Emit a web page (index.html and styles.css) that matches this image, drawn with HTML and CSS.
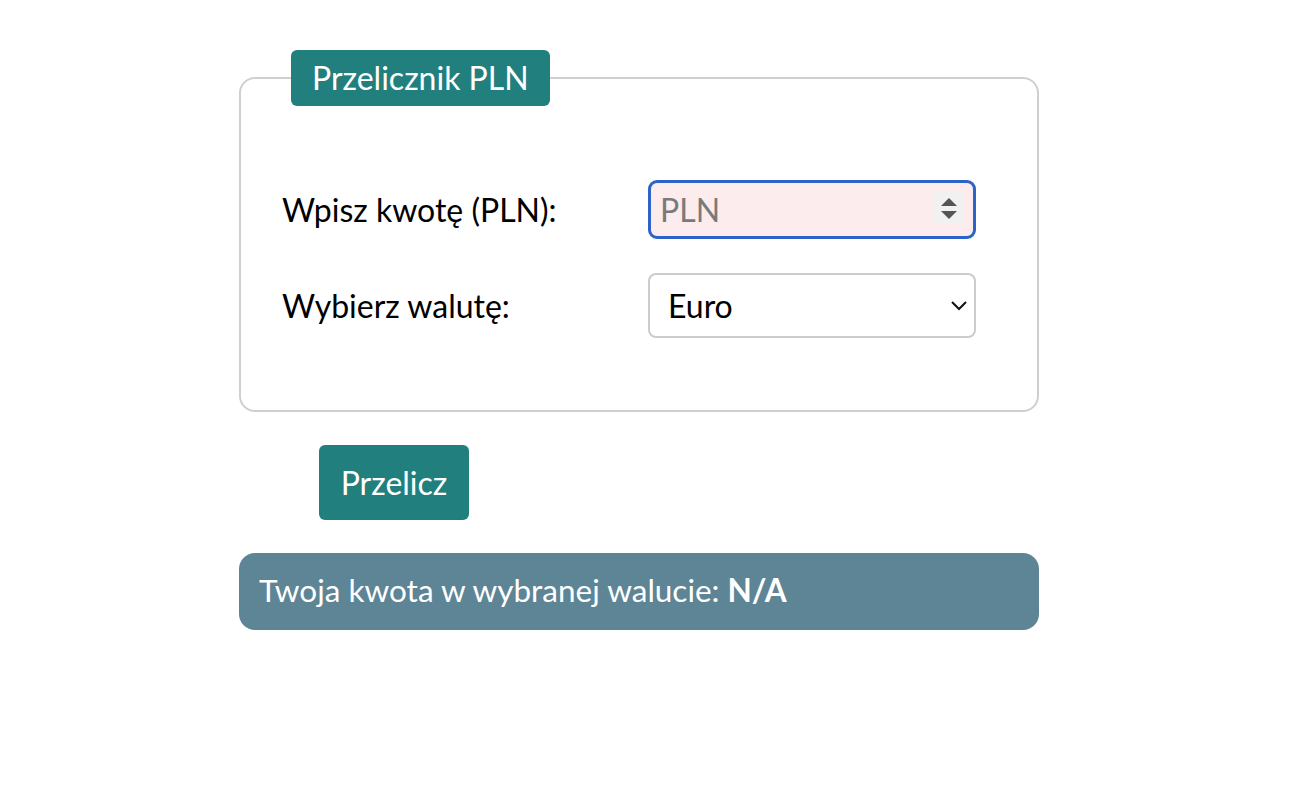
FILE: index.html
```html
<!DOCTYPE html>
<html lang="pl">
<head>
<meta charset="utf-8">
<title>Przelicznik PLN</title>
<link rel="stylesheet" href="styles.css">
</head>
<body>
<div class="page">
  <form class="converter">
    <fieldset class="card">
      <legend class="card-title">Przelicznik PLN</legend>
      <div class="rows">
        <label class="label" for="amount">Wpisz kwotę (PLN):</label>
        <div class="field">
          <input class="input" id="amount" type="number" placeholder="PLN">
          <span class="spinner">
            <svg width="30" height="32" viewBox="0 0 30 32"><path d="M7 14 L15 6 L23 14 Z" fill="#555"/><path d="M7 19 L23 19 L15 27 Z" fill="#555"/></svg>
          </span>
        </div>
        <label class="label" for="currency">Wybierz walutę:</label>
        <div class="field">
          <select class="select" id="currency">
            <option>Euro</option>
            <option>Dolar amerykański</option>
            <option>Funt brytyjski</option>
          </select>
          <span class="chevron">
            <svg width="18" height="12" viewBox="0 0 18 12"><path d="M2 3 L9 10 L16 3" fill="none" stroke="#111" stroke-width="2"/></svg>
          </span>
        </div>
      </div>
    </fieldset>
    <div class="actions">
      <button class="button" type="button">Przelicz</button>
    </div>
    <div class="result">Twoja kwota w wybranej walucie: <strong>N/A</strong></div>
  </form>
</div>
</body>
</html>
```
FILE: styles.css
```css
html, body {
  margin: 0;
  padding: 0;
  background: #fff;
}
body {
  font-family: Lato, "Open Sans", sans-serif;
  font-size: 32px;
  color: #000;
}
.page {
  padding: 50px 0 0 239px;
}
.converter {
  width: 800px;
}
.card {
  margin: 0;
  border: 2px solid #cfcfcf;
  border-radius: 16px;
  padding: 0 41px 72px 41px;
}
.card-title {
  margin-left: 9px;
  background: #217f7e;
  color: #fff;
  font-size: 32px;
  line-height: 56px;
  height: 56px;
  padding: 0 21px;
  border-radius: 6px;
}
.rows {
  margin-top: 74px;
  display: grid;
  grid-template-columns: 366px 328px;
  row-gap: 34px;
  align-items: center;
}
.label {
  font-size: 32px;
}
.field {
  position: relative;
}
.input {
  box-sizing: border-box;
  width: 328px;
  height: 59px;
  border: 3px solid #2b63c8;
  border-radius: 9px;
  background: #fdeced;
  font-family: Lato, sans-serif;
  font-size: 32px;
  padding: 0 9px;
  outline: none;
  -moz-appearance: textfield;
  display: block;
}
.input::-webkit-outer-spin-button,
.input::-webkit-inner-spin-button {
  -webkit-appearance: none;
  margin: 0;
}
.input::placeholder {
  color: #7a7a7a;
}
.spinner {
  position: absolute;
  right: 12px;
  top: 12px;
  width: 30px;
  height: 32px;
  background: #f1f1f1;
  display: flex;
  pointer-events: none;
}
.select {
  box-sizing: border-box;
  width: 328px;
  height: 65px;
  border: 2px solid #cccccc;
  border-radius: 8px;
  background: #fff;
  font-family: Lato, sans-serif;
  font-size: 32px;
  padding: 0 18px;
  color: #000;
  -webkit-appearance: none;
  appearance: none;
  display: block;
}
.chevron {
  position: absolute;
  right: 8px;
  top: 26px;
  display: flex;
  pointer-events: none;
}
.actions {
  padding: 33px 0 0 80px;
}
.button {
  width: 150px;
  height: 75px;
  background: #217f7e;
  color: #fff;
  border: none;
  border-radius: 6px;
  font-family: Lato, sans-serif;
  font-size: 32px;
  padding: 0;
  display: block;
}
.result {
  margin-top: 33px;
  height: 77px;
  background: #5d8596;
  color: #fff;
  border-radius: 16px;
  padding: 0 20px;
  line-height: 74px;
  font-size: 31.5px;
}
.result strong {
  font-weight: 700;
}
```
